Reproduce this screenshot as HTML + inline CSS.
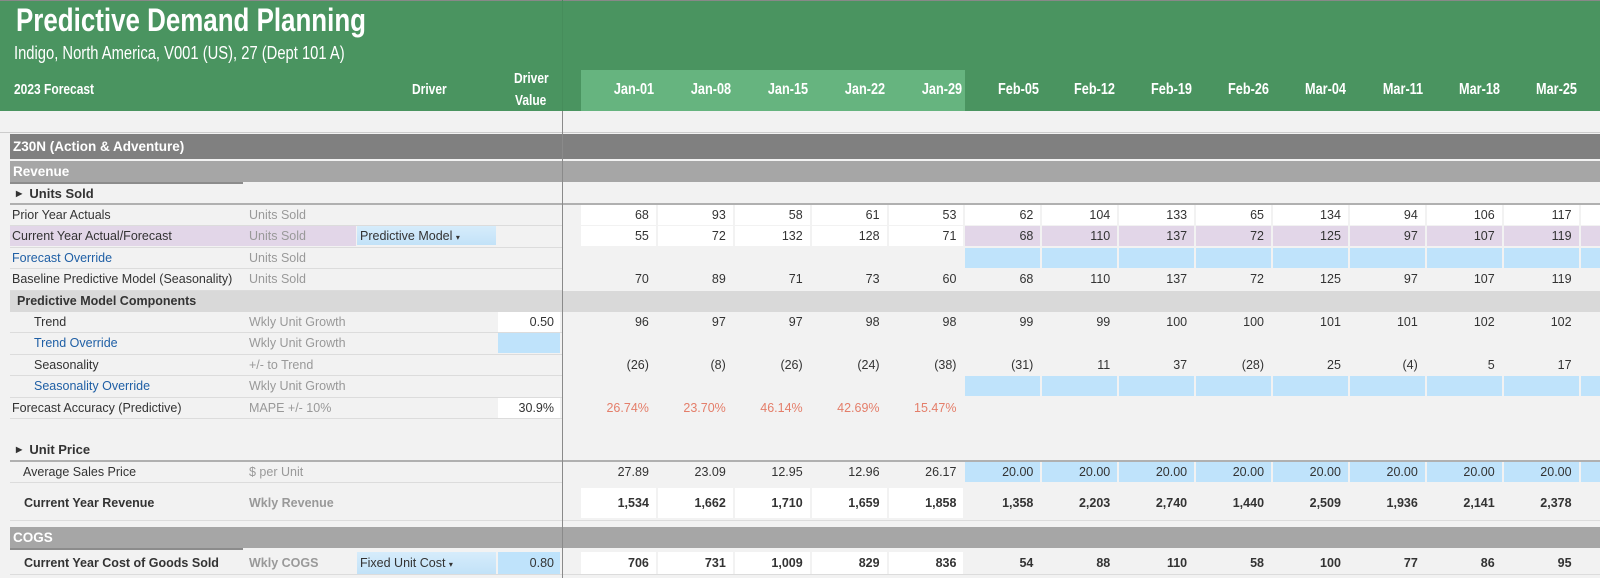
<!DOCTYPE html>
<html><head><meta charset="utf-8"><style>
*{margin:0;padding:0;box-sizing:border-box}
body{width:1600px;height:578px;overflow:hidden;background:#f2f2f2;font-family:"Liberation Sans",Arial,sans-serif;font-size:12.5px;color:#333;position:relative}
.hdr{position:absolute;left:0;top:0;width:1600px;height:111px;background:#4a9460;border-top:1px solid #888}
.cx{position:absolute;white-space:nowrap;transform-origin:left center;color:#fff;font-weight:bold}
.lg{position:absolute;left:581px;top:70px;width:384px;height:41px;background:#66b47f}
.dt{position:absolute;top:81px;width:77px;text-align:right;padding-right:4px;color:#fff;font-weight:bold;font-size:15.5px}
.dt span{display:inline-block;transform:scaleX(.82);transform-origin:right center}
.r{position:absolute;left:0;width:1600px;height:21.4px;line-height:20px}
.l{position:absolute;white-space:nowrap}
.dv{color:#999}
.bl{color:#1f5fa5}
.ln{position:absolute;left:10px;width:552px;bottom:0;height:1px;background:#dcdcdc}
.g{position:absolute;left:581px;top:0;display:grid;grid-template-columns:repeat(14,76.9px);height:20px}
.g span{text-align:right;padding-right:7px;border-right:2px solid #f2f2f2;height:20px}
.w{background:#fff}.p{background:#e2d6e8}.b{background:#bfe3fb}
.rd{color:#e47e6a}
.band{position:absolute;left:10px;width:1590px;color:#fff;font-weight:bold;font-size:13.5px;padding-left:3px}
.dd{position:absolute;left:357px;width:139px;height:19px;background:linear-gradient(#d6ecfb,#c2e2f8);padding-left:3px;color:#333}
.vl{position:absolute;width:62px;left:498px;height:20px;text-align:right;padding-right:6px}
.bold{font-weight:bold}
</style></head><body>
<div class="hdr"></div>
<div class="lg"></div>
<div class="cx" style="left:16px;top:2px;font-size:32px;transform:scaleX(.81)">Predictive Demand Planning</div>
<div class="cx" style="left:14px;top:43px;font-size:18px;font-weight:normal;transform:scaleX(.82)">Indigo, North America, V001 (US), 27 (Dept 101 A)</div>
<div class="cx" style="left:14px;top:81px;font-size:15px;transform:scaleX(.8)">2023 Forecast</div>
<div class="cx" style="left:412px;top:81px;font-size:15px;transform:scaleX(.8)">Driver</div>
<div class="cx" style="left:514px;top:70px;font-size:15px;transform:scaleX(.8)">Driver</div>
<div class="cx" style="left:515px;top:92px;font-size:15px;transform:scaleX(.8)">Value</div>
<div style="position:absolute;left:562px;top:0;width:1px;height:111px;background:#468d5b"></div>
<div class="dt" style="left:581px"><span>Jan-01</span></div>
<div class="dt" style="left:658px"><span>Jan-08</span></div>
<div class="dt" style="left:735px"><span>Jan-15</span></div>
<div class="dt" style="left:812px"><span>Jan-22</span></div>
<div class="dt" style="left:889px"><span>Jan-29</span></div>
<div class="dt" style="left:966px"><span>Feb-05</span></div>
<div class="dt" style="left:1042px"><span>Feb-12</span></div>
<div class="dt" style="left:1119px"><span>Feb-19</span></div>
<div class="dt" style="left:1196px"><span>Feb-26</span></div>
<div class="dt" style="left:1273px"><span>Mar-04</span></div>
<div class="dt" style="left:1350px"><span>Mar-11</span></div>
<div class="dt" style="left:1427px"><span>Mar-18</span></div>
<div class="dt" style="left:1504px"><span>Mar-25</span></div>

<div style="position:absolute;left:0;top:132px;width:1600px;height:1px;background:#ccc"></div>
<div class="band" style="top:134px;height:25px;line-height:25px;background:#808080">Z30N (Action &amp; Adventure)</div>
<div class="band" style="top:161px;height:21px;line-height:21px;background:#a6a6a6">Revenue</div>
<div style="position:absolute;left:10px;top:182px;width:233px;height:2px;background:#8c8c8c"></div>

<div class="r" style="top:184px"><span class="l bold" style="left:16px;font-size:13px"><span style="font-size:8px;position:relative;top:-2px">▶</span>&nbsp; Units Sold</span><div style="position:absolute;left:10px;right:0;bottom:0;height:2px;background:#b0b0b0"></div></div>

<div class="r" style="top:205px"><span class="l" style="left:12px">Prior Year Actuals</span><span class="l dv" style="left:249px">Units Sold</span><div class="ln"></div>
<div class="g"><span class="w">68</span><span class="w">93</span><span class="w">58</span><span class="w">61</span><span class="w">53</span><span class="w">62</span><span class="w">104</span><span class="w">133</span><span class="w">65</span><span class="w">134</span><span class="w">94</span><span class="w">106</span><span class="w">117</span><span class="w"></span></div></div>

<div class="r" style="top:226.4px"><div style="position:absolute;left:10px;width:346px;height:20px;background:#e2d6e8"></div><span class="l" style="left:12px">Current Year Actual/Forecast</span><span class="l dv" style="left:249px">Units Sold</span><div class="dd">Predictive Model <span style="font-size:8px">▾</span></div><div class="ln"></div>
<div class="g"><span class="w">55</span><span class="w">72</span><span class="w">132</span><span class="w">128</span><span class="w">71</span><span class="p">68</span><span class="p">110</span><span class="p">137</span><span class="p">72</span><span class="p">125</span><span class="p">97</span><span class="p">107</span><span class="p">119</span><span class="p"></span></div></div>

<div class="r" style="top:247.8px"><span class="l bl" style="left:12px">Forecast Override</span><span class="l dv" style="left:249px">Units Sold</span><div class="ln"></div>
<div class="g"><span></span><span></span><span></span><span></span><span></span><span class="b"></span><span class="b"></span><span class="b"></span><span class="b"></span><span class="b"></span><span class="b"></span><span class="b"></span><span class="b"></span><span class="b"></span></div></div>

<div class="r" style="top:269.2px"><span class="l" style="left:12px">Baseline Predictive Model (Seasonality)</span><span class="l dv" style="left:249px">Units Sold</span><div class="ln"></div>
<div class="g"><span>70</span><span>89</span><span>71</span><span>73</span><span>60</span><span>68</span><span>110</span><span>137</span><span>72</span><span>125</span><span>97</span><span>107</span><span>119</span><span></span></div></div>

<div class="r" style="top:290.6px;background:#d9d9d9;left:10px;width:1590px"><span class="l bold" style="left:7px">Predictive Model Components</span></div>

<div class="r" style="top:312px"><span class="l" style="left:34px">Trend</span><span class="l dv" style="left:249px">Wkly Unit Growth</span><div class="vl w">0.50</div><div class="ln"></div>
<div class="g"><span>96</span><span>97</span><span>97</span><span>98</span><span>98</span><span>99</span><span>99</span><span>100</span><span>100</span><span>101</span><span>101</span><span>102</span><span>102</span><span></span></div></div>

<div class="r" style="top:333.4px"><span class="l bl" style="left:34px">Trend Override</span><span class="l dv" style="left:249px">Wkly Unit Growth</span><div class="vl b"></div><div class="ln"></div></div>

<div class="r" style="top:354.8px"><span class="l" style="left:34px">Seasonality</span><span class="l dv" style="left:249px">+/- to Trend</span><div class="ln"></div>
<div class="g"><span>(26)</span><span>(8)</span><span>(26)</span><span>(24)</span><span>(38)</span><span>(31)</span><span>11</span><span>37</span><span>(28)</span><span>25</span><span>(4)</span><span>5</span><span>17</span><span></span></div></div>

<div class="r" style="top:376.2px"><span class="l bl" style="left:34px">Seasonality Override</span><span class="l dv" style="left:249px">Wkly Unit Growth</span><div class="ln"></div>
<div class="g"><span></span><span></span><span></span><span></span><span></span><span class="b"></span><span class="b"></span><span class="b"></span><span class="b"></span><span class="b"></span><span class="b"></span><span class="b"></span><span class="b"></span><span class="b"></span></div></div>

<div class="r" style="top:397.6px"><span class="l" style="left:12px">Forecast Accuracy (Predictive)</span><span class="l dv" style="left:249px">MAPE +/- 10%</span><div class="vl w">30.9%</div><div class="ln"></div>
<div class="g"><span class="rd">26.74%</span><span class="rd">23.70%</span><span class="rd">46.14%</span><span class="rd">42.69%</span><span class="rd">15.47%</span></div></div>

<div class="r" style="top:440.4px"><span class="l bold" style="left:16px;font-size:13px"><span style="font-size:8px;position:relative;top:-2px">▶</span>&nbsp; Unit Price</span><div style="position:absolute;left:10px;right:0;bottom:0;height:2px;background:#b0b0b0"></div></div>

<div class="r" style="top:461.8px"><span class="l" style="left:23px">Average Sales Price</span><span class="l dv" style="left:249px">$ per Unit</span><div class="ln"></div>
<div class="g"><span>27.89</span><span>23.09</span><span>12.95</span><span>12.96</span><span>26.17</span><span class="b">20.00</span><span class="b">20.00</span><span class="b">20.00</span><span class="b">20.00</span><span class="b">20.00</span><span class="b">20.00</span><span class="b">20.00</span><span class="b">20.00</span><span class="b"></span></div></div>

<div class="r bold" style="top:488px;height:33px;line-height:30px"><span class="l" style="left:24px">Current Year Revenue</span><span class="l dv" style="left:249px">Wkly Revenue</span><div class="ln" style="width:1590px"></div>
<div class="g" style="top:0;height:30px"><span class="w" style="height:30px">1,534</span><span class="w" style="height:30px">1,662</span><span class="w" style="height:30px">1,710</span><span class="w" style="height:30px">1,659</span><span class="w" style="height:30px">1,858</span><span>1,358</span><span>2,203</span><span>2,740</span><span>1,440</span><span>2,509</span><span>1,936</span><span>2,141</span><span>2,378</span><span></span></div></div>

<div class="band" style="top:527px;height:21px;line-height:21px;background:#a6a6a6">COGS</div>
<div style="position:absolute;left:10px;top:548px;width:233px;height:2px;background:#8c8c8c"></div>

<div class="r bold" style="top:552px;height:23px;line-height:22px"><span class="l" style="left:24px">Current Year Cost of Goods Sold</span><span class="l dv" style="left:249px">Wkly COGS</span><div class="dd" style="font-weight:normal;height:22px;line-height:22px">Fixed Unit Cost <span style="font-size:8px">▾</span></div><div class="vl b" style="font-weight:normal;height:22px">0.80</div><div class="ln" style="width:1590px"></div>
<div class="g" style="height:22px"><span class="w" style="height:22px">706</span><span class="w" style="height:22px">731</span><span class="w" style="height:22px">1,009</span><span class="w" style="height:22px">829</span><span class="w" style="height:22px">836</span><span>54</span><span>88</span><span>110</span><span>58</span><span>100</span><span>77</span><span>86</span><span>95</span><span></span></div></div>

<div style="position:absolute;left:562px;top:111px;width:1px;height:467px;background:#8a8a8a"></div>
</body></html>
